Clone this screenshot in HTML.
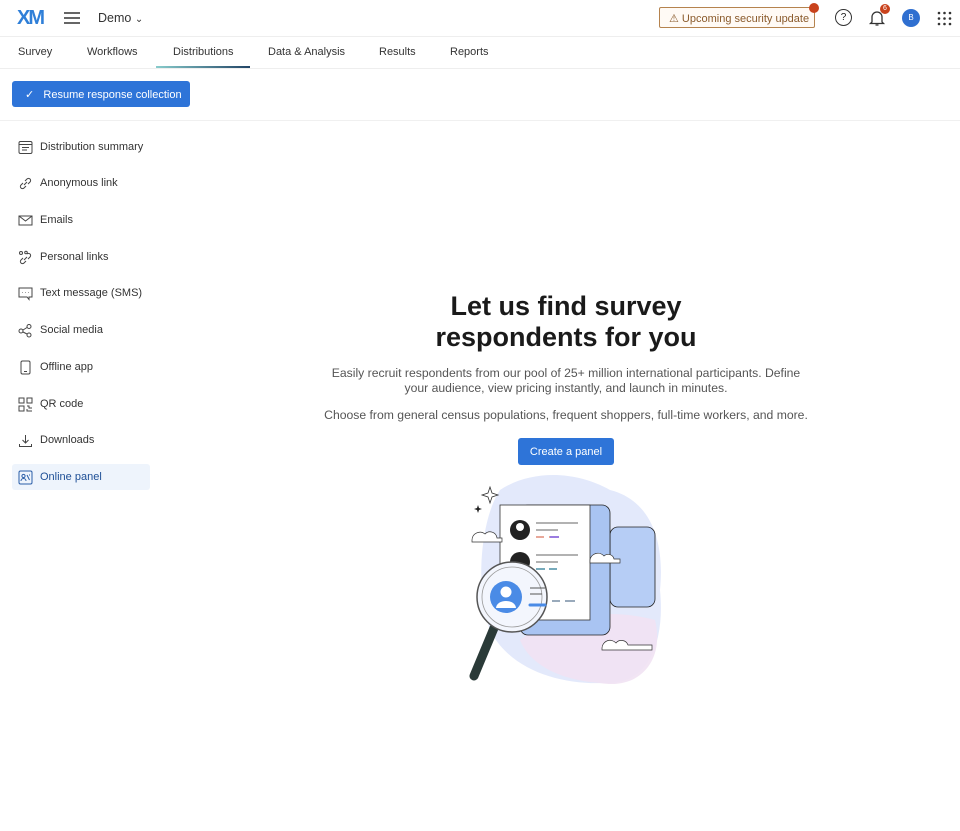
<!DOCTYPE html>
<html><head><style>
*{box-sizing:border-box;margin:0;padding:0}
body{width:960px;height:831px;background:#fff;font-family:"Liberation Sans",sans-serif;color:#1a1a1a;position:relative;overflow:hidden}
.a{position:absolute}
.tab{position:absolute;top:46px;font-size:11px;color:#333}
.si{position:absolute;left:18px;font-size:11px;color:#333;display:flex;align-items:center;gap:7px;height:20px}
.si svg{width:15px;height:15px}
p.c{position:absolute;left:300px;width:532px;text-align:center;color:#555;font-size:12.2px;line-height:14.5px}
</style></head><body>
<div class="a" style="left:17px;top:7px;font-size:20px;font-weight:bold;color:#2f7fd8;letter-spacing:-2px">XM</div>
<svg class="a" style="left:63px;top:11px" width="18" height="14"><path d="M1 2h16M1 7h16M1 12h16" stroke="#333" stroke-width="1.5"/></svg>
<div class="a" style="left:98px;top:11px;font-size:12.5px;color:#333">Demo <span style="font-size:10px">&#8964;</span></div>
<div class="a" style="left:659px;top:7px;width:156px;height:21px;border:1px solid #b5834e;border-radius:2px;background:#fffaf5;font-size:11px;color:#8a5a2b;padding:4px 0 0 9px">⚠ Upcoming security update</div>
<div class="a" style="left:809px;top:3px;width:10px;height:10px;border-radius:50%;background:#c9421c"></div>
<div class="a" style="left:835px;top:9px;width:17px;height:17px;border:1.3px solid #333;border-radius:50%;font-size:10px;text-align:center;line-height:15px">?</div>
<svg class="a" style="left:868px;top:9px" width="18" height="18"><path d="M4 13V8a5 5 0 0 1 10 0v5l1.5 1.5h-13zM7.5 16h3" fill="none" stroke="#333" stroke-width="1.3"/></svg>
<div class="a" style="left:880px;top:4px;width:10px;height:10px;border-radius:50%;background:#c9421c;color:#fff;font-size:7px;text-align:center;line-height:10px">6</div>
<div class="a" style="left:902px;top:9px;width:18px;height:18px;border-radius:50%;background:#2f6fd0;color:#fff;font-size:8px;text-align:center;line-height:18px">B</div>
<svg class="a" style="left:937px;top:11px" width="15" height="15" fill="#333"><circle cx="2" cy="2" r="1.3"/><circle cx="7.5" cy="2" r="1.3"/><circle cx="13" cy="2" r="1.3"/><circle cx="2" cy="7.5" r="1.3"/><circle cx="7.5" cy="7.5" r="1.3"/><circle cx="13" cy="7.5" r="1.3"/><circle cx="2" cy="13" r="1.3"/><circle cx="7.5" cy="13" r="1.3"/><circle cx="13" cy="13" r="1.3"/></svg>
<div class="a" style="left:0;top:36px;width:960px;height:1px;background:#eee"></div>
<div class="tab" style="left:18px">Survey</div><div class="tab" style="left:87px">Workflows</div><div class="tab" style="left:173px">Distributions</div><div class="tab" style="left:268px">Data &amp; Analysis</div><div class="tab" style="left:379px">Results</div><div class="tab" style="left:450px">Reports</div>
<div class="a" style="left:156px;top:66px;width:94px;height:2px;background:linear-gradient(90deg,#8cc,#246)"></div>
<div class="a" style="left:0;top:68px;width:960px;height:1px;background:#eee"></div>
<div class="a" style="left:12px;top:81px;width:178px;height:26px;background:#2e74d8;border-radius:3px;color:#fff;font-size:11px;padding:7px 0 0 13px">✓&nbsp;&nbsp; Resume response collection</div>
<div class="a" style="left:0;top:120px;width:960px;height:1px;background:#f0f0f0"></div>
<div class="si" style="top:137px"><svg viewBox="0 0 15 15" fill="none" stroke="#444"><rect x="1" y="1.5" width="13" height="12" rx="1.5"/><path d="M1 4.5h13M4 7.5h7M4 10h5"/></svg>Distribution summary</div>
<div class="si" style="top:173px"><svg viewBox="0 0 15 15" fill="none" stroke="#444"><path d="M6 9l3-3M5 7 3 9a2 2 0 0 0 3 3l2-2M10 8l2-2a2 2 0 0 0-3-3L7 5"/></svg>Anonymous link</div>
<div class="si" style="top:210px"><svg viewBox="0 0 15 15" fill="none" stroke="#444"><rect x="1" y="3" width="13" height="9"/><path d="M1 3l6.5 5L14 3"/></svg>Emails</div>
<div class="si" style="top:247px"><svg viewBox="0 0 15 15" fill="none" stroke="#444"><circle cx="3" cy="3" r="1.5"/><circle cx="8" cy="2.5" r="1.3"/><path d="M6 10l3-3M5 8 3 10a2 2 0 0 0 3 3l2-2M10 9l2-2a2 2 0 0 0-3-3"/></svg>Personal links</div>
<div class="si" style="top:283px"><svg viewBox="0 0 15 15" fill="none" stroke="#444"><path d="M1 2h13v9h-3v2.5L9 11H1z"/><path d="M4.5 6.5h.5M7.3 6.5h.5M10 6.5h.5"/></svg>Text message (SMS)</div>
<div class="si" style="top:320px"><svg viewBox="0 0 15 15" fill="none" stroke="#444"><circle cx="3" cy="8" r="2"/><circle cx="11" cy="3.5" r="2"/><circle cx="11" cy="12" r="2"/><path d="M5 7l4-2.5M5 9l4 2"/></svg>Social media</div>
<div class="si" style="top:357px"><svg viewBox="0 0 15 15" fill="none" stroke="#444"><rect x="3" y="1" width="9" height="13" rx="1.5"/><path d="M6 11.5h3"/></svg>Offline app</div>
<div class="si" style="top:394px"><svg viewBox="0 0 15 15" fill="none" stroke="#444"><rect x="1" y="1" width="5" height="5"/><rect x="9" y="1" width="5" height="5"/><rect x="1" y="9" width="5" height="5"/><path d="M9 9h2v2h3M9 12v2h5"/></svg>QR code</div>
<div class="si" style="top:430px"><svg viewBox="0 0 15 15" fill="none" stroke="#444"><path d="M7.5 2v8M4.5 7l3 3 3-3M1.5 11v2.5h12V11"/></svg>Downloads</div>
<div class="a" style="left:12px;top:464px;width:138px;height:26px;background:#eef4fc;border-radius:3px"></div>
<div class="si" style="top:467px;color:#1e4f96"><svg viewBox="0 0 15 15" fill="none" stroke="#2a5ea8"><rect x="1" y="1" width="13" height="13" rx="1.5"/><circle cx="5.5" cy="6" r="1.6"/><path d="M3 11a2.5 2.5 0 0 1 5 0M9 5l2.5 5M11 5h1"/></svg>Online panel</div>
<div class="a" style="left:300px;top:291px;width:532px;text-align:center;font-size:27px;font-weight:bold;line-height:31px">Let us find survey<br>respondents for you</div>
<p class="c" style="top:366px">Easily recruit respondents from our pool of 25+ million international participants. Define<br>your audience, view pricing instantly, and launch in minutes.</p>
<p class="c" style="top:408px">Choose from general census populations, frequent shoppers, full-time workers, and more.</p>
<div class="a" style="left:518px;top:438px;width:96px;height:27px;background:#2e74d8;border-radius:3px;color:#fff;font-size:11px;display:flex;align-items:center;justify-content:center">Create a panel</div>
<svg class="a" style="left:465px;top:470px" width="205" height="220" viewBox="465 470 205 220">
<path d="M500 490C530 470 575 470 610 490C650 500 665 540 660 590C665 640 650 685 605 683C560 685 510 670 490 630C475 590 480 520 500 490Z" fill="#e3e9fb"/>
<path d="M520 640C560 610 620 610 655 620C665 660 640 690 600 683C560 680 530 665 520 640Z" fill="#f1e2f3" opacity=".9"/>
<rect x="610" y="527" width="45" height="80" rx="8" fill="#b6cdf5" stroke="#222" stroke-width=".8"/>
<rect x="520" y="505" width="90" height="130" rx="8" fill="#a9c4f2" stroke="#222" stroke-width=".8"/>
<rect x="500" y="505" width="90" height="115" fill="#fff" stroke="#333" stroke-width=".8"/>
<circle cx="520" cy="530" r="10" fill="#222"/><circle cx="520" cy="527" r="4" fill="#fff"/>
<circle cx="520" cy="562" r="10" fill="#222"/>
<path d="M536 523h42M536 530h22M536 555h42M536 562h22" stroke="#666" stroke-width="1"/>
<path d="M536 537h8M549 537h10" stroke="#e8a89a" stroke-width="2"/><path d="M550 537h9" stroke="#9b7de0" stroke-width="2"/>
<path d="M536 569h9M549 569h8" stroke="#7ab" stroke-width="2"/>
<path d="M472 540a8 8 0 0 1 13-6a7 7 0 0 1 12 4h5v4h-30z" fill="#fff" stroke="#333" stroke-width=".7"/>
<path d="M590 560a8 8 0 0 1 14-4a6 6 0 0 1 10 3h6v4h-30z" fill="#fff" stroke="#333" stroke-width=".7"/>
<path d="M602 648a8 8 0 0 1 14-5a7 7 0 0 1 12 2h24v5h-50z" fill="#fff" stroke="#333" stroke-width=".7"/>
<path d="M490 487l2 6 6 2-6 2-2 6-2-6-6-2 6-2z" fill="#fff" stroke="#333" stroke-width=".8"/>
<path d="M478 505l1 3 3 1-3 1-1 3-1-3-3-1 3-1z" fill="#222"/>
<path d="M494 628l-20 48" stroke="#2a3a38" stroke-width="9" stroke-linecap="round"/>
<circle cx="512" cy="597" r="35" fill="#f3f6fd" stroke="#555" stroke-width="1.5"/>
<circle cx="512" cy="597" r="30" fill="none" stroke="#999" stroke-width=".8"/>
<circle cx="506" cy="597" r="16" fill="#4a8be6"/>
<circle cx="506" cy="592" r="5.5" fill="#fff"/><path d="M496 608a10 7 0 0 1 20 0" fill="#fff"/>
<path d="M530 588h15M530 594h12" stroke="#555"/>
<path d="M530 605h15" stroke="#4a8be6" stroke-width="3" stroke-linecap="round"/>
<path d="M552 601h8M565 601h10" stroke="#9ab" stroke-width="2"/>
</svg>
</body></html>
